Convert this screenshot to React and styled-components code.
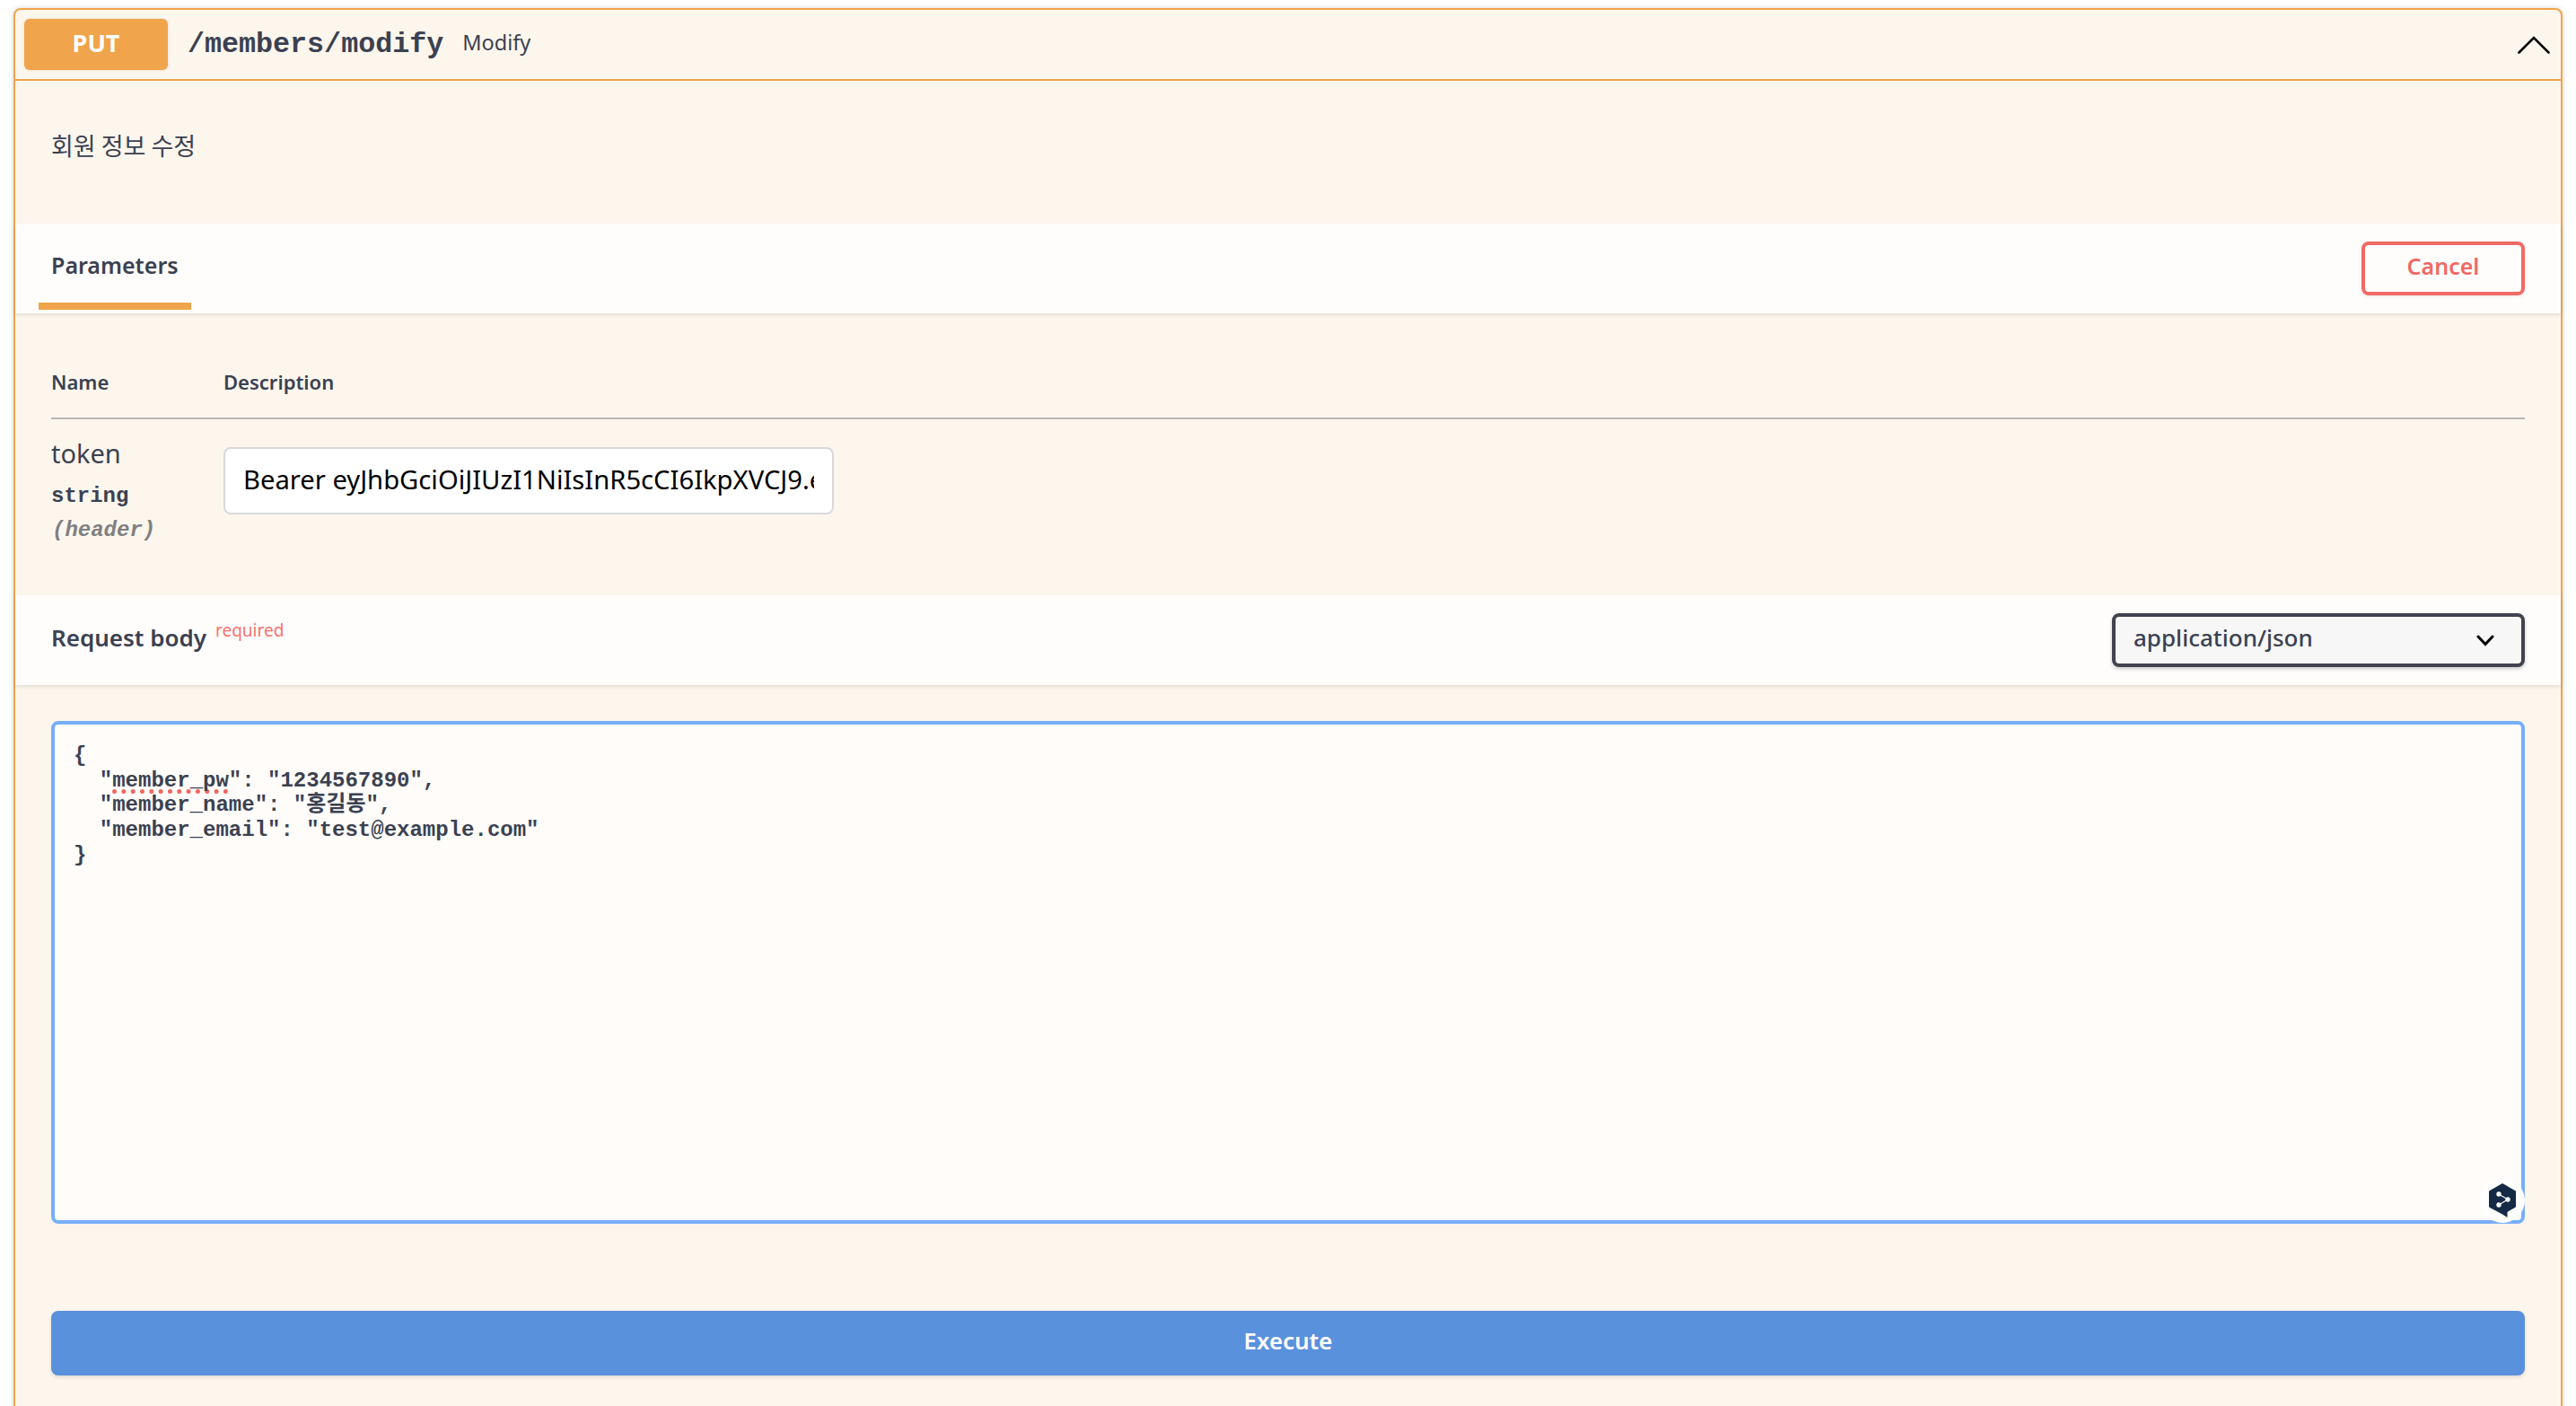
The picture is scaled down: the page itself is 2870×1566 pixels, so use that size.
import React from 'react';
import styled, { createGlobalStyle } from 'styled-components';

const sans = '"Noto Sans", "Noto Sans CJK KR", sans-serif';
const mono = '"Liberation Mono", "Noto Sans CJK KR", monospace';

const GlobalStyle = createGlobalStyle`
  html, body {
    margin: 0;
    height: 100%;
    overflow: hidden;
    background: #fff;
  }
  * { box-sizing: border-box; }
`;

const Opblock = styled.div`
  margin: 9px 15px 0;
  min-height: 1600px;
  background: #fdf6ed;
  border: 2px solid #f0a44b;
  border-radius: 8px;
  box-shadow: 0 0 6px rgba(0, 0, 0, 0.16);
  font-family: ${sans};
  color: #3b4151;
`;

const Summary = styled.div`
  display: flex;
  align-items: center;
  height: 79px;
  padding: 0 12px 0 10px;
  border-bottom: 2px solid #f0a44b;
`;

const Method = styled.div`
  display: flex;
  align-items: center;
  justify-content: center;
  width: 160px;
  height: 57px;
  margin-top: -1px;
  padding-bottom: 3px;
  background: #f0a44b;
  border-radius: 6px;
  color: #fff;
  font-size: 27px;
  font-weight: 700;
  box-shadow: 0 0 3px rgba(0, 0, 0, 0.12);
`;

const Path = styled.span`
  margin-left: 22px;
  font-family: ${mono};
  font-size: 31.7px;
  font-weight: 700;
`;

const SummaryText = styled.span`
  margin-left: 21px;
  margin-top: -6px;
  font-size: 23.5px;
  flex: 1;
`;

const Description = styled.div`
  height: 159px;
  padding: 52px 0 0 40px;
  font-size: 27px;
  line-height: 40px;
  font-family: "Noto Sans CJK KR", sans-serif;
`;

const SectionHeader = styled.div`
  display: flex;
  align-items: center;
  justify-content: space-between;
  height: 100px;
  padding: 0 40px;
  background: rgba(255, 255, 255, 0.8);
  box-shadow: 0 2px 4px rgba(0, 0, 0, 0.1);
`;

const TabHeader = styled(SectionHeader)`
  padding: 0 40px 0 26px;
`;

const Tab = styled.div`
  align-self: flex-end;
  width: 170px;
  height: 96px;
  margin-bottom: 4px;
  padding: 26px 0 0 14px;
  border-bottom: 8px solid #f0a44b;
  font-size: 25px;
  line-height: 40px;
  font-weight: 600;
`;

const CancelButton = styled.button`
  width: 182px;
  height: 60px;
  background: transparent;
  border: 4px solid #ef6a64;
  border-radius: 8px;
  color: #ef6a64;
  font-family: ${sans};
  font-size: 25px;
  font-weight: 600;
  box-shadow: 0 1px 4px rgba(0, 0, 0, 0.1);
  padding: 0 0 6px;
`;

const ParamsTable = styled.div`
  height: 314px;
  padding: 55px 40px 0;
`;

const TableHead = styled.div`
  display: grid;
  grid-template-columns: 192px 1fr;
  height: 63px;
  border-bottom: 2px solid #b8b5b1;
  font-size: 22px;
  line-height: 42px;
  font-weight: 600;
`;

const TableRow = styled.div`
  display: grid;
  grid-template-columns: 192px 1fr;
  padding-top: 18px;
`;

const ParamName = styled.div`
  font-size: 29px;
  line-height: 40px;
`;

const ParamType = styled.div`
  margin-top: 9px;
  font-family: ${mono};
  font-size: 24px;
  line-height: 38px;
  font-weight: 700;
`;

const ParamIn = styled.div`
  font-family: ${mono};
  font-size: 24px;
  line-height: 38px;
  font-weight: 700;
  font-style: italic;
  color: #808080;
  padding-left: 1px;
`;

const TokenInput = styled.input`
  display: block;
  width: 680px;
  height: 75px;
  margin-top: 13px;
  padding: 0 20px 3px;
  background: #fff;
  border: 2px solid #d9d9d9;
  border-radius: 8px;
  color: #000;
  font-family: ${sans};
  font-size: 29.2px;
  outline: none;
`;

const BodyTitle = styled.div`
  margin-top: -6px;
  font-size: 26px;
  font-weight: 600;
`;

const Required = styled.sup`
  margin-left: 10px;
  color: #f6726b;
  font-size: 19px;
  font-weight: 400;
  line-height: 0;
  vertical-align: 11px;
`;

const SelectBox = styled.div`
  display: flex;
  align-items: center;
  justify-content: space-between;
  width: 460px;
  height: 60px;
  padding: 0 30px 7px 20px;
  background: #f7f7f7;
  border: 4px solid #41444e;
  border-radius: 8px;
  box-shadow: 0 2px 4px rgba(0, 0, 0, 0.2);
  font-size: 26px;
  font-weight: 500;

  svg {
    margin-top: 7px;
  }
`;

const BodyWrap = styled.div`
  position: relative;
  margin: 40px 40px 0;
`;

const Editor = styled.pre`
  margin: 0;
  height: 560px;
  padding: 21px 21px;
  background: #fffcfa;
  border: 4px solid #76aefa;
  border-radius: 8px;
  font-family: ${mono};
  font-size: 24px;
  line-height: 27.7px;
  font-weight: 700;
  color: #3b4151;
`;

const Misspelt = styled.span`
  text-decoration: underline dotted #f0675f 5px;
  text-decoration-skip-ink: none;
  text-underline-offset: 3px;
`;

const TranslateBadge = styled.div`
  position: absolute;
  right: 0;
  bottom: 1px;
  display: flex;
  align-items: center;
  justify-content: center;
  width: 50px;
  height: 50px;
  background: #fff;
  border-radius: 50%;
`;

const ExecuteButton = styled.button`
  display: block;
  width: calc(100% - 80px);
  height: 72px;
  margin: 97px 40px 0;
  background: #5a91dc;
  border: none;
  border-radius: 8px;
  color: #fff;
  font-family: ${sans};
  font-size: 26px;
  font-weight: 600;
  box-shadow: 0 2px 4px rgba(0, 0, 0, 0.12);
  padding: 0 0 7px;
`;

function CollapseArrow() {
  return (
    <svg width="36" height="20" viewBox="0 0 36 20" fill="none" stroke="#000" strokeWidth="2.6" strokeLinecap="round">
      <path d="M1.5 18.5 18 2l16.5 16.5" />
    </svg>
  );
}

function SelectArrow() {
  return (
    <svg width="20" height="13" viewBox="0 0 20 13" fill="none" stroke="#000" strokeWidth="3" strokeLinecap="round">
      <path d="M2 2l8 8.5L18 2" />
    </svg>
  );
}

function DeeplIcon() {
  return (
    <svg width="30" height="38" viewBox="0 0 30 38">
      <path d="M15 0 29 8a1.6 1.6 0 0 1 1 1.6v15.8a1.6 1.6 0 0 1-1 1.6l-8.500 4.900V38l-5.500-3.500L1 27a1.600 1.600 0 0 1-1-1.600V9.600A1.600 1.600 0 0 1 1 8z" fill="#142a45" />
      <path d="M11 12 21 18 11 24" fill="none" stroke="#fff" strokeWidth="1.100" />
      <circle cx="11" cy="12" r="2.700" fill="#fff" />
      <circle cx="21" cy="18" r="2.700" fill="#fff" />
      <circle cx="11" cy="24" r="2.700" fill="#fff" />
    </svg>
  );
}

function App() {
  return (
    <>
      <GlobalStyle />
      <Opblock>
        <Summary>
          <Method>PUT</Method>
          <Path>/members/modify</Path>
          <SummaryText>Modify</SummaryText>
          <CollapseArrow />
        </Summary>
        <Description>회원 정보 수정</Description>
        <TabHeader>
          <Tab>Parameters</Tab>
          <CancelButton>Cancel</CancelButton>
        </TabHeader>
        <ParamsTable>
          <TableHead>
            <div>Name</div>
            <div>Description</div>
          </TableHead>
          <TableRow>
            <div>
              <ParamName>token</ParamName>
              <ParamType>string</ParamType>
              <ParamIn>(header)</ParamIn>
            </div>
            <div>
              <TokenInput readOnly value="Bearer eyJhbGciOiJIUzI1NiIsInR5cCI6IkpXVCJ9.eyJtZW1iZXJfaWQiOiJ0ZXN0In0" />
            </div>
          </TableRow>
        </ParamsTable>
        <SectionHeader>
          <BodyTitle>
            Request body<Required>required</Required>
          </BodyTitle>
          <SelectBox>
            application/json
            <SelectArrow />
          </SelectBox>
        </SectionHeader>
        <BodyWrap>
          <Editor>
            {'{\n  "'}
            <Misspelt>member_pw</Misspelt>
            {'": "1234567890",\n  "member_name": "홍길동",\n  "member_email": "test@example.com"\n}'}
          </Editor>
          <TranslateBadge>
            <DeeplIcon />
          </TranslateBadge>
        </BodyWrap>
        <ExecuteButton>Execute</ExecuteButton>
      </Opblock>
    </>
  );
}

export default App;
